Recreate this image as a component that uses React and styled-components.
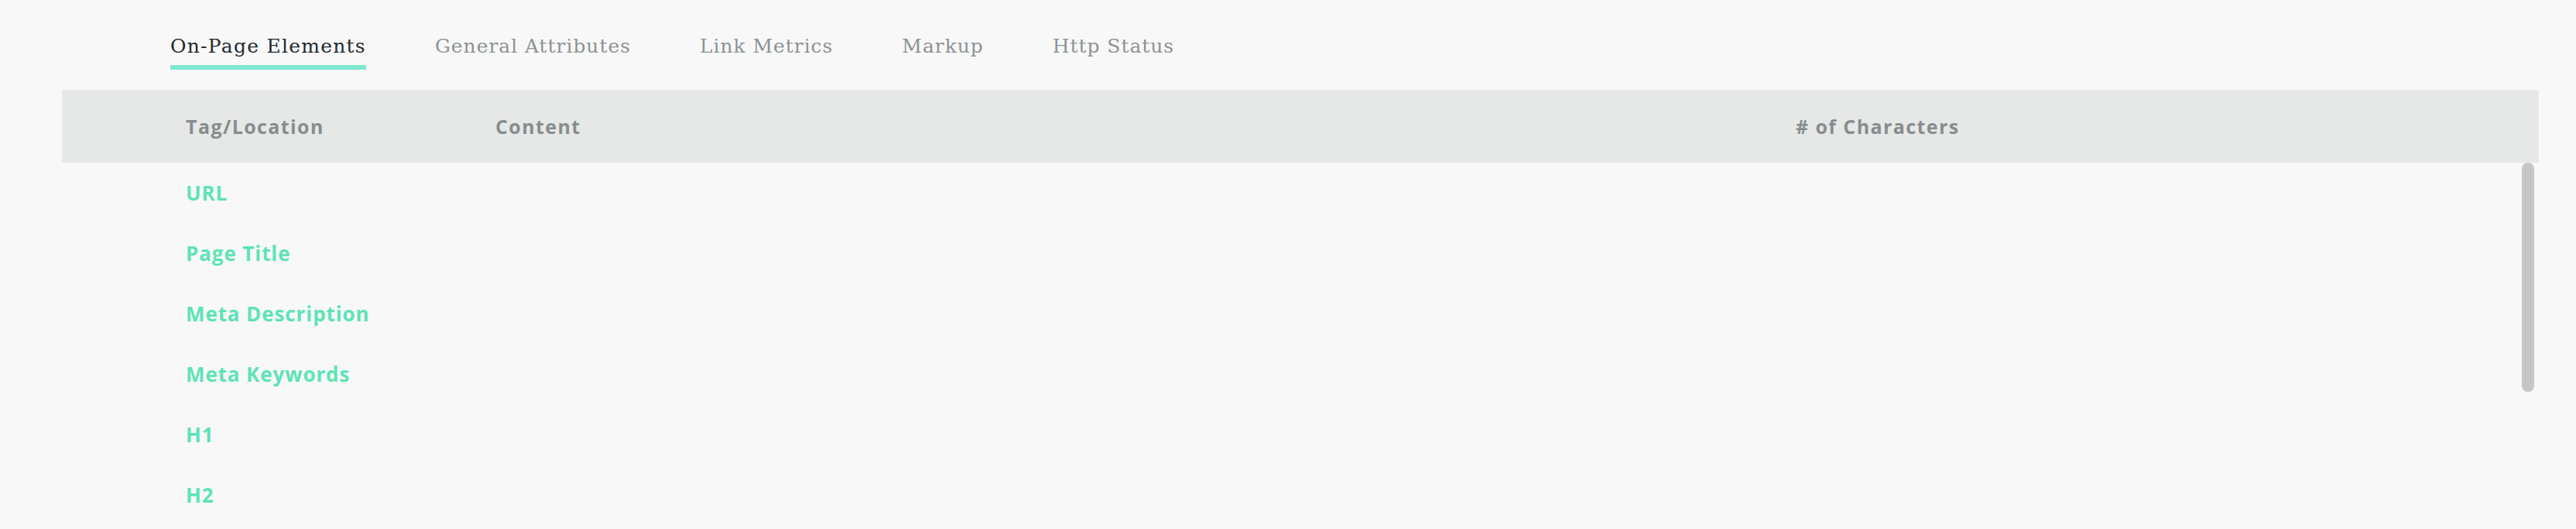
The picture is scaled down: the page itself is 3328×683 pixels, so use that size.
import React, { useState } from "react";
import styled, { createGlobalStyle } from "styled-components";

const GlobalStyle = createGlobalStyle`
  html, body {
    margin: 0;
    padding: 0;
    background: #f8f8f8;
    overflow: hidden;
  }
  * {
    box-sizing: border-box;
  }
`;

const Page = styled.div`
  width: 100%;
  height: 683px;
  padding-left: 80px;
  display: flex;
  flex-direction: column;
  background: #f8f8f8;
`;

const TabBar = styled.nav`
  display: flex;
  align-items: flex-start;
  gap: 89px;
  padding: 45px 0 0 140px;
  margin-bottom: 26px;
`;

const Tab = styled.button`
  background: none;
  border: 0;
  margin: 0;
  padding: 0 0 9px;
  border-bottom: 6px solid ${(p) => (p.$active ? "#7fe8cf" : "transparent")};
  font-family: "DejaVu Serif", serif;
  font-size: 25px;
  line-height: 30px;
  letter-spacing: ${(p) => (p.$active ? "1.25px" : "0.95px")};
  color: ${(p) => (p.$active ? "#1f2a2e" : "#8d9394")};
  cursor: pointer;
`;

const Table = styled.section`
  width: 3200px;
  display: flex;
  flex-direction: column;
  flex: 1;
  min-height: 0;
`;

const Columns = styled.div`
  display: grid;
  grid-template-columns: 400px 1680px 1fr;
  padding-left: 160px;
  align-items: center;
`;

const HeadRow = styled(Columns)`
  height: 94px;
  background: #e6e8e7;
`;

const HeadCell = styled.div`
  font-family: "Open Sans", sans-serif;
  font-weight: 700;
  font-size: 25px;
  letter-spacing: 1.4px;
  color: #878d8e;
`;

const Body = styled.div`
  position: relative;
  width: 3194px;
  flex: 1;
  min-height: 0;
`;

const Rows = styled.div`
  height: 100%;
  overflow: hidden;
`;

/* drawn thumb: the headless browser hides native scrollbars */
const Thumb = styled.div`
  position: absolute;
  top: 0;
  right: 0;
  width: 16px;
  height: 296px;
  border-radius: 8px;
  background: #c6c6c6;
`;

const Row = styled(Columns)`
  height: 78px;
`;

const Label = styled.div`
  font-family: "Open Sans", sans-serif;
  font-weight: 700;
  font-size: 26px;
  letter-spacing: 0.9px;
  color: #5ee3b7;
`;

const Cell = styled.div`
  font-family: "Open Sans", sans-serif;
  font-size: 24px;
  color: #4a5254;
`;

const tabs = [
  "On-Page Elements",
  "General Attributes",
  "Link Metrics",
  "Markup",
  "Http Status",
];

const rows = [
  { tag: "URL" },
  { tag: "Page Title" },
  { tag: "Meta Description" },
  { tag: "Meta Keywords" },
  { tag: "H1" },
  { tag: "H2" },
];

const App = () => {
  const [active, setActive] = useState(0);

  return (
    <Page>
      <GlobalStyle />
      <TabBar>
        {tabs.map((t, i) => (
          <Tab key={t} $active={i === active} onClick={() => setActive(i)}>
            {t}
          </Tab>
        ))}
      </TabBar>
      <Table>
        <HeadRow>
          <HeadCell>Tag/Location</HeadCell>
          <HeadCell>Content</HeadCell>
          <HeadCell># of Characters</HeadCell>
        </HeadRow>
        <Body>
          <Rows>
            {rows.map((r) => (
              <Row key={r.tag}>
                <Label>{r.tag}</Label>
                <Cell>{r.content}</Cell>
                <Cell>{r.count}</Cell>
              </Row>
            ))}
          </Rows>
          <Thumb />
        </Body>
      </Table>
    </Page>
  );
};

export default App;
